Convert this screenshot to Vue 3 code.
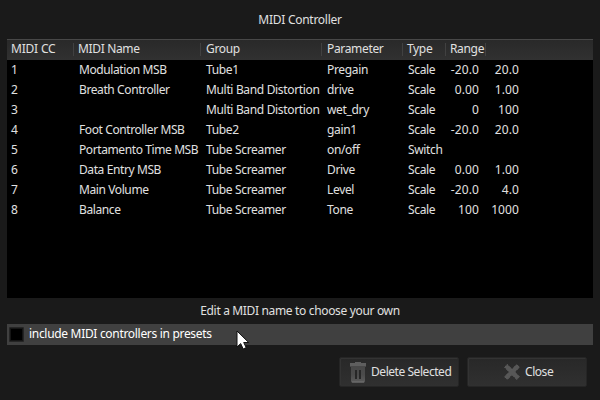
<script setup>
const columns = ['MIDI CC', 'MIDI Name', 'Group', 'Parameter', 'Type', 'Range']

const rows = [
  { cc: 1, name: 'Modulation MSB', group: 'Tube1', parameter: 'Pregain', type: 'Scale', low: '-20.0', high: '20.0' },
  { cc: 2, name: 'Breath Controller', group: 'Multi Band Distortion', parameter: 'drive', type: 'Scale', low: '0.00', high: '1.00' },
  { cc: 3, name: '', group: 'Multi Band Distortion', parameter: 'wet_dry', type: 'Scale', low: '0', high: '100' },
  { cc: 4, name: 'Foot Controller MSB', group: 'Tube2', parameter: 'gain1', type: 'Scale', low: '-20.0', high: '20.0' },
  { cc: 5, name: 'Portamento Time MSB', group: 'Tube Screamer', parameter: 'on/off', type: 'Switch', low: '', high: '' },
  { cc: 6, name: 'Data Entry MSB', group: 'Tube Screamer', parameter: 'Drive', type: 'Scale', low: '0.00', high: '1.00' },
  { cc: 7, name: 'Main Volume', group: 'Tube Screamer', parameter: 'Level', type: 'Scale', low: '-20.0', high: '4.0' },
  { cc: 8, name: 'Balance', group: 'Tube Screamer', parameter: 'Tone', type: 'Scale', low: '100', high: '1000' },
]
</script>

<template>
  <main class="dialog">
    <h1 class="title">MIDI Controller</h1>

    <section class="table">
      <div class="line head">
        <span v-for="column in columns" :key="column" class="head-cell">{{ column }}</span>
      </div>
      <div v-for="row in rows" :key="row.cc" class="line row">
        <span>{{ row.cc }}</span>
        <span class="name">{{ row.name }}</span>
        <span>{{ row.group }}</span>
        <span>{{ row.parameter }}</span>
        <span>{{ row.type }}</span>
        <span class="number">{{ row.low }}</span>
        <span class="number">{{ row.high }}</span>
      </div>
    </section>

    <p class="hint">Edit a MIDI name to choose your own</p>

    <label class="option">
      <span class="box"></span>
      <span>include MIDI controllers in presets</span>
    </label>

    <footer class="actions">
      <button class="button delete" type="button">
        <svg width="16" height="22" viewBox="0 0 16 22">
          <defs>
            <linearGradient id="bin" x1="0" y1="0" x2="0" y2="1">
              <stop offset="0" stop-color="#484848" />
              <stop offset="0.5" stop-color="#4b4b4b" />
              <stop offset="1" stop-color="#5c5c5c" />
            </linearGradient>
          </defs>
          <path d="M5 1h6v1h5v3H0V2h5z" fill="#5e5e5e" />
          <path d="M0 5h16v1H0z" fill="#484848" />
          <path d="M1 6h14v14q0 1.500-1.500 1.500h-11q-1.500 0-1.500-1.500z" fill="url(#bin)" />
          <path d="M2 21h12" stroke="#737373" />
          <path d="M5 9h2v9H5zM9 9h2v9H9z" fill="#272727" />
        </svg>
        <span>Delete Selected</span>
      </button>
      <button class="button close" type="button">
        <svg width="16" height="16" viewBox="0 0 16 16">
          <path d="M3.300 0.500L8 5.200 12.700 0.500 15.500 3.300 10.800 8 15.500 12.700 12.700 15.500 8 10.800 3.300 15.500 0.500 12.700 5.200 8 0.500 3.300z" fill="#575757" stroke="#6c6c6c" stroke-width="0.800" stroke-dasharray="1 1" />
        </svg>
        <span>Close</span>
      </button>
    </footer>

    <svg class="pointer" width="14" height="20" viewBox="0 0 14 20">
      <path d="M1 1v16l3.700-3.400 2.500 5.400 3-1.400-2.500-5.100h5z" fill="#fff" stroke="#111" stroke-width="1" />
    </svg>
  </main>
</template>

<style>
body {
  background: #1a1a1a;
}
</style>

<style scoped>
.dialog {
  position: relative;
  box-sizing: border-box;
  width: 600px;
  height: 400px;
  padding: 0 7px;
  overflow: hidden;
  background: #1a1a1a;
  color: #e0e0e0;
  font: 12px/20px "Noto Sans", "Open Sans", sans-serif;
  letter-spacing: -0.34px;
  white-space: nowrap;
}

.title {
  margin: 0;
  padding: 10px 0 9px;
  font: inherit;
  letter-spacing: -0.27px;
  text-align: center;
}

.table {
  height: 259px;
  background: #000;
}

.line {
  display: grid;
}

.head {
  grid-template-columns: 67px 127px 121px 81px 43px 40px;
  box-sizing: border-box;
  height: 21px;
  border-top: 1px solid #484848;
  background: linear-gradient(#292929, #313131);
  line-height: 18px;
}

.head-cell {
  position: relative;
  padding-left: 4px;
}

.head-cell:first-child {
  letter-spacing: -0.2px;
}

.head-cell:nth-child(3),
.head-cell:nth-child(4) {
  padding-left: 5px;
}

.head-cell::after {
  position: absolute;
  top: 3px;
  right: 0;
  width: 1px;
  height: 13px;
  background: #414141;
  content: "";
}

.row {
  grid-template-columns: 68px 127px 121px 81px 41px 30px 40px;
  height: 20px;
  padding-left: 4px;
}

.name {
  letter-spacing: -0.4px;
}

.number {
  letter-spacing: 0.1px;
  text-align: right;
}

.hint {
  margin: 0;
  padding: 3px 0;
  text-align: center;
}

.option {
  display: flex;
  align-items: center;
  gap: 5px;
  box-sizing: border-box;
  height: 21px;
  padding: 0 2px 1px;
  background: #404040;
  color: #fff;
  letter-spacing: -0.31px;
}

.box {
  box-sizing: border-box;
  width: 15px;
  height: 15px;
  border: 1px solid #252525;
  border-radius: 1px;
  background: #000;
  box-shadow: inset 0 0 0 1px #151515;
}

.actions {
  display: flex;
  justify-content: flex-end;
  gap: 8px;
  padding: 12px 6px 0 0;
}

.button {
  display: flex;
  align-items: center;
  box-sizing: border-box;
  width: 120px;
  height: 30px;
  padding: 0;
  border: 1px solid #252525;
  border-radius: 2px;
  background: linear-gradient(#282828, #303030);
  box-shadow: inset 1px 1px #333;
  color: inherit;
  font: inherit;
  letter-spacing: -0.45px;
}

.delete {
  gap: 5px;
  padding-left: 10px;
}

.close {
  gap: 5px;
  padding-left: 36px;
}

.pointer {
  position: absolute;
  top: 330px;
  left: 236px;
}
</style>
